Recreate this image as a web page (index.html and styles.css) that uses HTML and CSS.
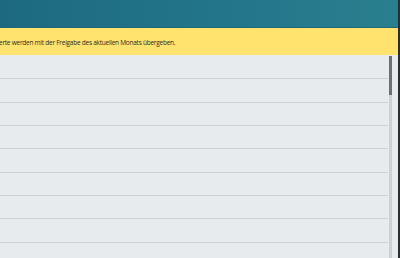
FILE: index.html
```html
<!DOCTYPE html>
<html lang="de">
<head>
<meta charset="utf-8">
<link rel="stylesheet" href="styles.css">
</head>
<body>
<div class="app">
  <div class="main">
    <header class="topbar"></header>
    <div class="notice"><span class="notice-text">erte werden mit der Freigabe des aktuellen Monats übergeben.</span></div>
    <div class="listwrap">
      <ul class="list">
        <li class="row"></li>
        <li class="row"></li>
        <li class="row"></li>
        <li class="row"></li>
        <li class="row"></li>
        <li class="row"></li>
        <li class="row"></li>
        <li class="row"></li>
        <li class="row"></li>
      </ul>
      <div class="gutter">
        <div class="track"><div class="thumb"></div></div>
      </div>
    </div>
  </div>
  <div class="edge"></div>
</div>
</body>
</html>
```

FILE: styles.css
```css
html, body {
  margin: 0;
  padding: 0;
  width: 400px;
  height: 258px;
  overflow: hidden;
  background: #e8ebee;
  font-family: "Open Sans", "Noto Sans", sans-serif;
}
.app {
  display: flex;
  width: 400px;
  height: 258px;
}
.main {
  flex: 1;
  display: flex;
  flex-direction: column;
  min-width: 0;
}
.edge {
  width: 2px;
  background: #2a2e33;
}
.topbar {
  height: 27px;
  flex: none;
  background: linear-gradient(90deg, #1d6a80 0%, #23758a 55%, #2a7f8e 100%);
  border-bottom: 1px solid #1f6878;
}
.notice {
  height: 27px;
  flex: none;
  background: #ffe36e;
  display: flex;
  align-items: center;
  overflow: hidden;
}
.notice-text {
  font-size: 6.5px;
  letter-spacing: -0.25px;
  color: #2e2c22;
  white-space: nowrap;
  margin-left: -1px;
  margin-top: 1px;
}
.listwrap {
  flex: 1;
  display: flex;
  min-height: 0;
  overflow: hidden;
}
.list {
  list-style: none;
  margin: 0;
  padding: 1px 0 0;
  flex: 1;
  display: flex;
  flex-direction: column;
}
.row {
  height: 23.33px;
  flex: none;
  box-sizing: border-box;
  border-bottom: 1px solid #cdd1d4;
}
.gutter {
  width: 10px;
  flex: none;
  padding: 1px 6px 0 1px;
  box-sizing: border-box;
}
.track {
  width: 3px;
  height: 100%;
  background: #cdd1d4;
}
.thumb {
  width: 3px;
  height: 39px;
  background: #6c7075;
}
```
